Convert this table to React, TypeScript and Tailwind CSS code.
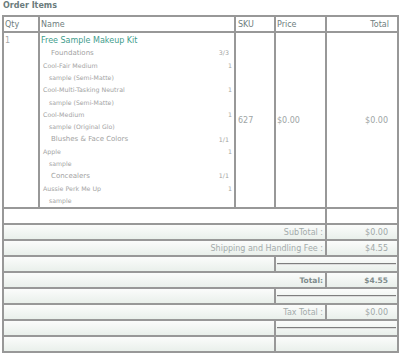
import React from "react";

type Line = { t: "cat" | "prod" | "sample"; name: string; q?: string };

const lines: Line[] = [
  { t: "cat", name: "Foundations", q: "3/3" },
  { t: "prod", name: "Cool-Fair Medium", q: "1" },
  { t: "sample", name: "sample (Semi-Matte)" },
  { t: "prod", name: "Cool-Multi-Tasking Neutral", q: "1" },
  { t: "sample", name: "sample (Semi-Matte)" },
  { t: "prod", name: "Cool-Medium", q: "1" },
  { t: "sample", name: "sample (Original Glo)" },
  { t: "cat", name: "Blushes & Face Colors", q: "1/1" },
  { t: "prod", name: "Apple", q: "1" },
  { t: "sample", name: "sample" },
  { t: "cat", name: "Concealers", q: "1/1" },
  { t: "prod", name: "Aussie Perk Me Up", q: "1" },
  { t: "sample", name: "sample" },
];

const C = "border-r-2 border-b-2 border-[#989898]";
const ROW = "grid grid-cols-[36px_196px_40px_51px_72px]";
const GRAD = "bg-linear-to-b from-[#fbfcfb] to-[#e7eee9]";

function SubLine({ l }: { l: Line }) {
  if (l.t === "cat") {
    return (
      <div className="h-[12.3px] flex items-center justify-between pl-[11px] pr-[5px] text-[7px] text-[#a2a2a2]">
        <span>{l.name}</span>
        <span className="text-[6.3px]">{l.q}</span>
      </div>
    );
  }
  if (l.t === "prod") {
    return (
      <div className="h-[12.3px] flex items-center justify-between pl-[3px] pr-[2px] text-[6.3px] text-[#a4a4a4]">
        <span>{l.name}</span>
        <span>{l.q}</span>
      </div>
    );
  }
  return (
    <div className="h-[12.3px] flex items-center pl-[9px] text-[6.2px] text-[#a4a4a4]">
      <span>{l.name}</span>
    </div>
  );
}

function LabelRow({ label, value, bold }: { label: string; value: string; bold?: boolean }) {
  return (
    <div className={`${ROW} h-[16px] ${GRAD}`}>
      <div
        className={`${C} col-span-4 flex items-center justify-end pr-[2px] pt-[2px] ${
          bold ? "font-bold text-[7.5px] text-[#7f8c8c]" : "text-[8px] text-[#a3abab]"
        }`}
      >
        {label}
      </div>
      <div
        className={`${C} flex items-center justify-end pr-[9px] pt-[2px] ${
          bold ? "font-bold text-[7.5px] text-[#7f8c8c]" : "text-[8px] text-[#a0a8a8]"
        }`}
      >
        {value}
      </div>
    </div>
  );
}

function HrRow({ hr }: { hr: boolean }) {
  return (
    <div className={`${ROW} h-[16px] ${GRAD}`}>
      <div className={`${C} col-span-3`} />
      <div className={`${C} col-span-2 flex items-center px-[1px]`}>
        {hr && <div className="w-full h-[2px] border-t border-t-[#7e7e7e] border-b border-b-[#dcdcdc]" />}
      </div>
    </div>
  );
}

export default function App() {
  return (
    <div className="w-[400px] h-[353px] bg-white font-['DejaVu_Sans',sans-serif] overflow-hidden">
      <div className="h-[15px] pl-[3px] pt-[1px] text-[8px] leading-[10px] font-bold text-[#6b7c7c]">Order Items</div>
      <div className="ml-[2px] w-[397px] border-l-2 border-t-2 border-[#989898]">
        {/* header */}
        <div className={`${ROW} h-[16px] text-[8px] text-[#6f7e7e]`}>
          <div className={`${C} flex items-center pl-[1px] pt-[2px]`}>Qty</div>
          <div className={`${C} flex items-center pl-[1px] pt-[2px]`}>Name</div>
          <div className={`${C} flex items-center pl-[2px] pt-[2px]`}>SKU</div>
          <div className={`${C} flex items-center pl-[1px] pt-[2px]`}>Price</div>
          <div className={`${C} flex items-center justify-end pr-[8px] pt-[2px]`}>Total</div>
        </div>
        {/* item */}
        <div className={`${ROW} h-[176px] text-[8px] text-[#9ea5a5]`}>
          <div className={`${C} pl-[1px] pt-[2px]`}>
            <div className="h-[12px] flex items-center text-[#a8a8a8]">1</div>
          </div>
          <div className={`${C} pt-[2px] flex flex-col`}>
            <div className="h-[12px] flex items-center pl-[1px] text-[8px] text-[#3f9d8d]">Free Sample Makeup Kit</div>
            {lines.map((l, i) => (
              <SubLine key={i} l={l} />
            ))}
          </div>
          <div className={`${C} flex items-center pl-[2px] pt-[2px]`}>627</div>
          <div className={`${C} flex items-center pl-[1px] pt-[2px]`}>$0.00</div>
          <div className={`${C} flex items-center justify-end pr-[9px] pt-[2px]`}>$0.00</div>
        </div>
        {/* empty white row */}
        <div className={`${ROW} h-[16px]`}>
          <div className={`${C} col-span-4`} />
          <div className={C} />
        </div>
        <LabelRow label="SubTotal :" value="$0.00" />
        <LabelRow label="Shipping and Handling Fee :" value="$4.55" />
        <HrRow hr />
        <LabelRow label="Total:" value="$4.55" bold />
        <HrRow hr />
        <LabelRow label="Tax Total :" value="$0.00" />
        <HrRow hr />
        <HrRow hr={false} />
      </div>
    </div>
  );
}
